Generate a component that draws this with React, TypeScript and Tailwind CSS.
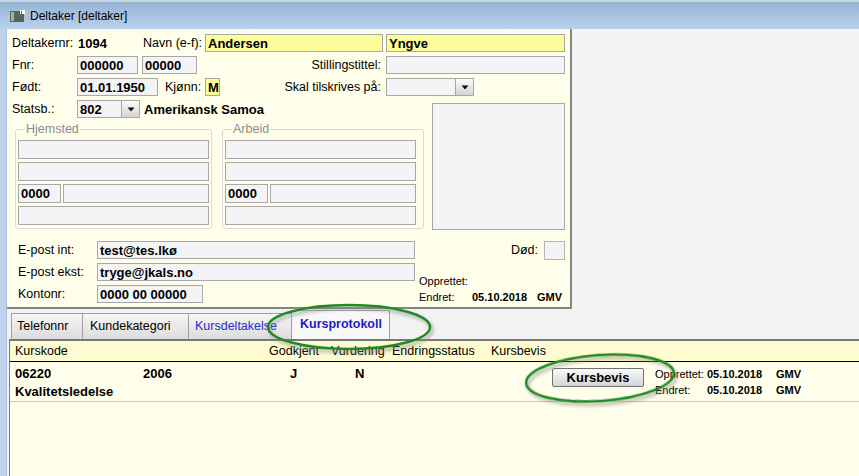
import React from "react";

type BoxProps = {
  className?: string;
  children?: React.ReactNode;
  yellow?: boolean;
};

function Field({ className, children, yellow }: BoxProps) {
  return (
    <div
      className={`flex items-center pl-[2px] border border-[#a8a8a8] text-[13px] font-bold leading-none overflow-hidden whitespace-nowrap ${
        yellow ? "bg-[#fcfc9a]" : "bg-[#f4f4f6]"
      } ${className ?? ""}`}
    >
      {children}
    </div>
  );
}

function Select({ className, children }: BoxProps) {
  return (
    <div
      className={`flex items-stretch border border-[#a8a8a8] bg-[#f4f4f6] text-[13px] font-bold leading-none ${
        className ?? ""
      }`}
    >
      <div className="flex-1 flex items-center pl-[2px]">{children}</div>
      <div className="w-[18px] border-l border-[#a8a8a8] bg-gradient-to-b from-[#fbfbfb] to-[#d4d4d4] flex items-center justify-center">
        <svg width="8" height="5" viewBox="0 0 8 5">
          <path d="M0.5 0.5h7L4 4.5z" fill="#111" />
        </svg>
      </div>
    </div>
  );
}

function AddressGroup({ title, className }: { title: string; className: string }) {
  return (
    <fieldset
      className={`border border-[#dadad0] rounded-[3px] pl-[2px] pb-[3px] ${className}`}
    >
      <legend className="ml-[7px] px-[1px] text-[12.5px] leading-[14px] text-[#8c8c8c]">
        {title}
      </legend>
      <div className="mt-[4px] flex flex-col gap-[3px] w-[191px]">
        <Field className="h-[19px]" />
        <Field className="h-[19px]" />
        <div className="flex gap-[2px]">
          <Field className="h-[19px] w-[43px] pl-0">0000</Field>
          <Field className="h-[19px] flex-1" />
        </div>
        <Field className="h-[19px]" />
      </div>
    </fieldset>
  );
}

function Tab({
  className,
  children,
}: {
  className: string;
  children: React.ReactNode;
}) {
  return (
    <div
      className={`h-[26px] flex items-center border-t border-l border-[#a0a0a0] bg-gradient-to-b from-[#f6f6f6] to-[#dcdcdc] text-[12.5px] ${className}`}
    >
      {children}
    </div>
  );
}

export default function App() {
  return (
    <div className="relative w-[859px] h-[476px] overflow-hidden bg-[#f4f4f4] text-black font-['Liberation_Sans',Arial,sans-serif]">
      {/* title bar */}
      <div className="h-[29px] flex items-center border-t-2 border-[#c6d3e1] bg-gradient-to-b from-[#97b4d5] to-[#bad1eb]">
        <svg className="ml-[10px]" width="15" height="12" viewBox="0 0 15 12">
          <rect x="0" y="1" width="14" height="11" fill="#56665a" />
          <rect x="1" y="2" width="3" height="9" fill="#9fb3a2" />
          <rect x="10" y="0" width="5" height="4" fill="#ffffff" />
          <rect x="11" y="1" width="1" height="3" fill="#56665a" />
        </svg>
        <span className="ml-[5px] text-[12px]">Deltaker [deltaker]</span>
      </div>

      <div className="flex h-[447px]">
        <div className="w-[7px] bg-[#bfd3ec] border-r border-[#a6bedb]" />

        <div className="flex-1 flex flex-col">
          {/* top form */}
          <div className="flex h-[280px]">
            <div className="w-[565px] bg-[#fffeea] border-r-2 border-b-2 border-[#858585] pt-[5px] text-[12.5px] leading-none">
              <div className="flex items-center h-[18px] pl-[5px]">
                <span className="w-[66px]">Deltakernr:</span>
                <span className="w-[65px] text-[13px] font-bold">1094</span>
                <span className="w-[62px]">Navn (e-f):</span>
                <Field className="w-[178px] h-[18px]" yellow>
                  Andersen
                </Field>
                <Field className="ml-[3px] w-[179px] h-[18px]" yellow>
                  Yngve
                </Field>
              </div>

              <div className="flex items-center h-[18px] pl-[5px] mt-[4px]">
                <span className="w-[65px]">Fnr:</span>
                <Field className="w-[61px] h-[18px]">000000</Field>
                <Field className="ml-[4px] w-[55px] h-[18px]">00000</Field>
                <span className="w-[189px] text-right pr-[5px]">Stillingstittel:</span>
                <Field className="w-[179px] h-[18px]" />
              </div>

              <div className="flex items-center h-[18px] pl-[5px] mt-[4px]">
                <span className="w-[65px]">Født:</span>
                <Field className="w-[81px] h-[18px]">01.01.1950</Field>
                <span className="ml-[7px] w-[40px]">Kjønn:</span>
                <Field className="w-[15px] h-[18px]" yellow>
                  M
                </Field>
                <span className="w-[166px] text-right pr-[5px]">Skal tilskrives på:</span>
                <Select className="w-[88px] h-[18px]" />
              </div>

              <div className="flex mt-[4px]">
                <div className="w-[418px]">
                  <div className="flex items-center h-[18px] pl-[5px]">
                    <span className="w-[65px]">Statsb.:</span>
                    <Select className="w-[63px] h-[18px]">802</Select>
                    <span className="ml-[4px] text-[13px] font-bold">Amerikansk Samoa</span>
                  </div>
                  <div className="flex mt-[4px] pl-[8px] gap-[10px]">
                    <AddressGroup title="Hjemsted" className="w-[197px]" />
                    <AddressGroup title="Arbeid" className="w-[202px]" />
                  </div>
                </div>
                <div className="ml-[7px] mt-[3px] w-[133px] h-[127px] border border-[#a8a8a8] bg-[#f4f4f6]" />
              </div>

              <div className="flex mt-[11px]">
                <div className="pl-[11px]">
                  <div className="flex items-center h-[18px]">
                    <span className="w-[79px]">E-post int:</span>
                    <Field className="w-[318px] h-[18px]">test@tes.lkø</Field>
                  </div>
                  <div className="flex items-center h-[18px] mt-[4px]">
                    <span className="w-[79px]">E-post ekst:</span>
                    <Field className="w-[318px] h-[18px]">tryge@jkals.no</Field>
                  </div>
                  <div className="flex items-center h-[18px] mt-[4px]">
                    <span className="w-[79px]">Kontonr:</span>
                    <Field className="w-[106px] h-[18px]">0000 00 00000</Field>
                  </div>
                </div>
                <div className="ml-[4px] w-[146px]">
                  <div className="flex items-center justify-end h-[19px]">
                    <span className="mr-[6px]">Død:</span>
                    <div className="w-[21px] h-[19px] border border-[#b4b4b4] bg-[#f4f4f6]" />
                  </div>
                  <div className="mt-[13px] text-[11px] leading-[16px]">Opprettet:</div>
                  <div className="flex text-[11px] leading-[16px]">
                    <span className="w-[53px]">Endret:</span>
                    <span className="w-[65px] font-bold">05.10.2018</span>
                    <span className="font-bold">GMV</span>
                  </div>
                </div>
              </div>
            </div>
            <div className="flex-1 bg-[#f4f4f4]" />
          </div>

          {/* tabs */}
          <div className="h-[30px] flex items-end pl-[4px] bg-[#f2f2f2]">
            <Tab className="w-[71px] pl-[5px]">Telefonnr</Tab>
            <Tab className="w-[106px] pl-[7px]">Kundekategori</Tab>
            <Tab className="w-[103px] pl-[6px] text-[#2a2ad2]">Kursdeltakelse</Tab>
            <div className="w-[99px] h-[29px] flex items-center pl-[8px] pb-[1px] border-t border-x border-[#a0a0a0] bg-[#f8f8f8] text-[12.5px] font-bold text-[#1c1cc8]">
              Kursprotokoll
            </div>
          </div>

          {/* course list */}
          <div className="flex-1 ml-[2px] border-t-2 border-l border-[#787878] bg-[#fffeea] text-[12.5px] leading-none">
            <div className="h-[21px] flex items-center pl-[5px] bg-[#fdfbcf] border-b border-black">
              <span className="w-[254px]">Kurskode</span>
              <span className="w-[62px]">Godkjent</span>
              <span className="w-[61px]">Vurdering</span>
              <span className="w-[99px]">Endringsstatus</span>
              <span>Kursbevis</span>
            </div>
            <div className="h-[40px] flex pl-[5px] border-b border-[#c8c8c8]">
              <div className="w-[537px] pt-[4px] text-[13px] font-bold leading-[16px]">
                <div className="flex">
                  <span className="w-[128px]">06220</span>
                  <span className="w-[147px]">2006</span>
                  <span className="w-[65px]">J</span>
                  <span>N</span>
                </div>
                <div className="mt-[2px]">Kvalitetsledelse</div>
              </div>
              <div className="mt-[6px] w-[92px] h-[19px] flex items-center justify-center border border-[#707070] rounded-[2px] bg-gradient-to-b from-[#fafafa] to-[#d5d5d5] text-[13px] font-bold">
                Kursbevis
              </div>
              <div className="ml-[11px] pt-[4px] text-[11px] leading-[16px]">
                <div className="flex">
                  <span className="w-[52px]">Opprettet:</span>
                  <span className="w-[69px] font-bold">05.10.2018</span>
                  <span className="font-bold">GMV</span>
                </div>
                <div className="flex">
                  <span className="w-[52px]">Endret:</span>
                  <span className="w-[69px] font-bold">05.10.2018</span>
                  <span className="font-bold">GMV</span>
                </div>
              </div>
            </div>
          </div>
        </div>
      </div>

      {/* annotation ellipses */}
      <svg
        className="absolute left-0 top-0 pointer-events-none"
        width="859"
        height="476"
        viewBox="0 0 859 476"
      >
        <defs>
          <filter id="soft" x="-10%" y="-30%" width="120%" height="160%">
            <feGaussianBlur stdDeviation="1.5" />
          </filter>
        </defs>
        <g filter="url(#soft)" opacity="0.45" fill="none" stroke="#8a8a8a" strokeWidth="4">
          <ellipse cx="351" cy="330" rx="81" ry="22" />
          <ellipse cx="602" cy="381" rx="74" ry="23" transform="rotate(-4 602 381)" />
        </g>
        <g fill="none" stroke="#208a24" strokeWidth="2.5">
          <ellipse cx="349" cy="327" rx="81" ry="22" />
          <ellipse cx="600" cy="378" rx="74" ry="23" transform="rotate(-4 600 378)" />
        </g>
      </svg>
    </div>
  );
}
